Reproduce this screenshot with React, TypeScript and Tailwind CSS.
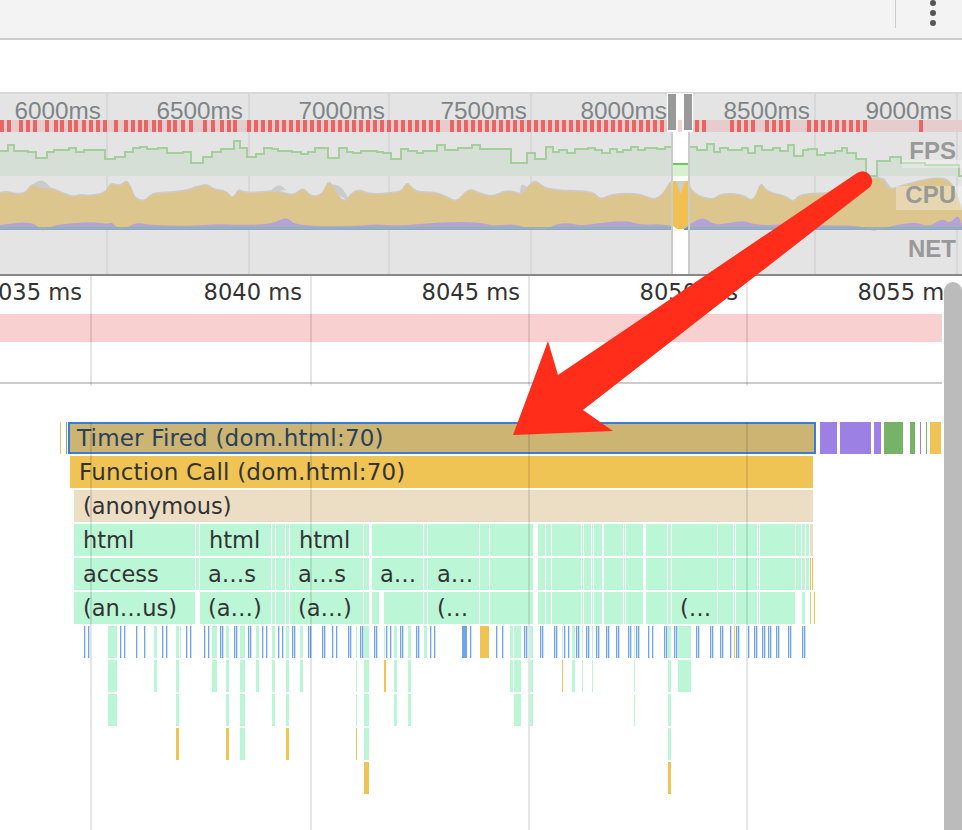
const MINT = 'bg-[#bbf7d6]'
const TAN = 'bg-[#ecdec5]'
const GOLD = 'bg-[#f0c355]'
const PURPLE = 'bg-[#9d80e4]'
const GREEN = 'bg-[#76b366]'
const BLUE = 'bg-[#6ea6e8] border-r border-[#cfe0f7]'

type Seg = [number, number, string]
type Label = [number, string]
type Row = { segs: Seg[]; labels?: Label[] }

const mint = (pairs: number[][]): Seg[] => pairs.map(([a, b]) => [a, b, MINT])
const gold = (pairs: number[][]): Seg[] => pairs.map(([a, b]) => [a, b, GOLD])
const ticks = (xs: number[]): Seg[] => xs.map((x) => [x, x + 2, BLUE])

// shared slices of the html / access / (anonymous) rows
const leftCols = [[74, 195], [200, 271], [272, 275], [276, 285], [286, 289], [290, 363], [364, 369]]
const midCols = [[424, 427], [428, 479], [480, 489], [490, 533], [538, 545], [546, 551], [552, 581], [582, 583], [584, 591], [592, 593], [594, 602], [604, 623], [624, 625], [626, 643], [646, 667], [668, 671], [672, 717], [718, 733], [734, 735], [736, 757], [758, 759], [760, 795]]
const tailCols = [[796, 801], [802, 805], [806, 809]]

const rows: Row[] = [
  {
    segs: [
      [60, 61, GOLD], [66, 67, GREEN],
      [820, 837, PURPLE], [840, 871, PURPLE], [874, 881, PURPLE], [884, 903, GREEN], [910, 915, GREEN],
      [920, 921, PURPLE], [926, 927, GREEN], [930, 941, GOLD],
    ],
  },
  { segs: [[70, 813, GOLD]], labels: [[79, 'Function Call (dom.html:70)']] },
  { segs: [[74, 813, TAN]], labels: [[83, '(anonymous)']] },
  {
    segs: [...mint(leftCols), ...mint([[196, 199], [372, 423]]), ...mint(midCols), ...mint(tailCols), [810, 813, TAN]],
    labels: [[83, 'html'], [209, 'html'], [299, 'html']],
  },
  {
    segs: [...mint(leftCols), ...mint([[196, 199], [372, 423]]), ...mint(midCols), ...mint(tailCols), [810, 811, GOLD], [812, 813, GOLD]],
    labels: [[83, 'access'], [208, 'a…s'], [298, 'a…s'], [380, 'a…'], [437, 'a…']],
  },
  {
    segs: [...mint(leftCols), ...mint([[372, 379], [384, 423]]), ...mint(midCols), ...mint([[802, 805]]), [810, 811, GOLD], [814, 815, GOLD]],
    labels: [[83, '(an…us)'], [208, '(a…)'], [298, '(a…)'], [437, '(…'], [680, '(…']],
  },
  {
    segs: [
      ...mint([[108, 117], [154, 157], [176, 179], [180, 181], [212, 217], [226, 229], [240, 245], [256, 259], [272, 275], [286, 289], [300, 303], [356, 357], [364, 369], [384, 385], [394, 397], [408, 411], [424, 427], [510, 513], [514, 521], [530, 533], [562, 563], [572, 575], [582, 583], [592, 593], [634, 635], [668, 671], [678, 691]]),
      ...ticks([84, 88, 120, 124, 136, 144, 162, 166, 186, 190, 204, 208, 220, 222, 234, 236, 248, 250, 262, 266, 278, 282, 292, 294, 308, 310, 322, 324, 332, 336, 348, 350, 360, 362, 374, 376, 386, 390, 400, 402, 416, 418, 430, 434, 470, 496, 502, 524, 526, 540, 542, 554, 556, 564, 568, 576, 578, 586, 588, 596, 598, 606, 608, 616, 618, 628, 630, 636, 638, 648, 652, 664, 666, 674, 676, 696, 698, 710, 712, 720, 722, 730, 736, 738, 748, 754, 756, 762, 764, 768, 770, 776, 778, 788, 790, 802, 804]),
      [462, 467, 'bg-[#6ea6e8]'], [480, 489, GOLD], [734, 735, GOLD],
    ],
  },
  {
    segs: [
      ...mint([[108, 117], [154, 157], [176, 179], [212, 217], [226, 229], [240, 245], [256, 259], [272, 275], [286, 289], [300, 303], [356, 357], [364, 369], [394, 397], [408, 411], [510, 513], [514, 521], [530, 533], [572, 575], [582, 583], [592, 593], [634, 635], [668, 671], [678, 691]]),
      ...gold([[384, 385.5], [562, 563]]),
    ],
  },
  { segs: mint([[108, 117], [176, 179], [226, 229], [240, 245], [272, 275], [286, 289], [356, 357], [364, 369], [394, 397], [408, 411], [514, 521], [530, 533], [634, 635], [668, 671]]) },
  { segs: [...gold([[176, 179], [226, 229], [286, 289], [356, 357]]), ...mint([[240, 245], [364, 369], [668, 671]])] },
  { segs: gold([[364, 369], [668, 671]]) },
]

const fpsSteps = [
  [0, 151], [8, 145], [14, 151], [28, 152], [36, 158], [47, 152], [54, 150], [69, 148], [76, 152], [84, 150], [105, 159], [115, 157], [125, 152], [133, 148], [140, 147], [147, 149], [158, 148], [167, 153], [183, 152], [191, 163], [203, 157], [212, 152], [221, 149], [227, 149], [234, 141], [240, 148], [247, 157], [256, 154], [264, 148], [272, 149], [278, 151], [292, 152], [301, 154], [308, 152], [315, 148], [328, 158], [339, 148], [347, 152], [353, 153], [361, 151], [377, 152], [383, 153], [391, 159], [401, 149], [408, 151], [417, 153], [423, 151], [437, 145], [445, 150], [458, 148], [472, 145], [480, 149], [511, 163], [527, 153], [535, 159], [546, 147], [553, 152], [559, 150], [567, 153], [575, 149], [588, 148], [595, 150], [602, 153], [610, 149], [617, 152], [623, 150], [631, 147], [638, 150], [645, 148], [657, 149], [665, 147], [672, 164], [688, 147], [697, 150], [707, 144], [714, 152], [720, 148], [728, 150], [742, 148], [748, 153], [755, 146], [762, 150], [773, 148], [780, 151], [788, 145], [794, 156], [803, 150], [808, 149], [817, 155], [825, 153], [835, 151], [842, 148], [847, 153], [856, 159], [866, 176], [877, 161], [890, 157], [901, 163], [912, 163], [925, 165], [945, 165], [959, 176],
]
const fpsLine = fpsSteps.map(([x, y], i) => (i === 0 ? `M${x} ${y}` : `H${x}V${y}`)).join('') + 'H962'
const fpsArea = `${fpsLine}V176H0Z`

const cpuLeft = [[0, 580], [20, 575], [40, 583], [75, 583], [95, 552], [120, 565], [150, 565], [200, 585], [220, 592], [240, 585], [265, 590], [315, 582], [330, 550], [360, 560], [380, 542], [395, 565], [405, 597], [435, 606], [455, 580], [530, 578], [570, 570], [620, 552], [640, 570], [680, 575], [698, 600], [715, 568], [730, 580], [790, 578], [830, 573], [880, 590], [910, 563], [930, 590], [965, 590], [985, 540], [1005, 570], [1032, 612], [1055, 580], [1080, 571], [1110, 585], [1180, 580], [1205, 575], [1222, 545], [1245, 578], [1305, 578], [1340, 592], [1370, 608], [1395, 578], [1415, 570]]
const cpuRight = [[0, 582], [40, 592], [70, 575], [100, 575], [120, 585], [140, 565], [165, 540], [200, 573], [340, 575], [360, 603], [395, 583], [480, 582], [520, 603], [550, 585], [572, 540], [598, 560], [622, 540], [640, 585], [700, 603], [720, 582], [790, 585], [820, 610], [842, 545], [860, 578], [920, 590], [940, 610], [960, 582], [1100, 580], [1170, 535], [1210, 535], [1230, 572], [1255, 560], [1320, 545], [1360, 535], [1415, 540], [1446, 630]]
const cpuTop = [...cpuLeft.map(([x, y]) => [x / 3, y / 3]), ...cpuRight.map(([x, y]) => [480 + x / 3, y / 3])]

const purpleTop = [[0, 225], [8, 224], [24, 222], [36, 224], [42, 232], [50, 226], [72, 223], [95, 222], [108, 224], [112, 222], [121, 232], [135, 222], [150, 225], [190, 226], [217, 224], [240, 225], [273, 224], [287, 216], [295, 226], [360, 226], [375, 224], [400, 226], [440, 222], [480, 222], [492, 226], [512, 224], [520, 226], [543, 231], [560, 222], [580, 225], [585, 225], [625, 220], [640, 225], [660, 224], [671, 226], [688, 226], [703, 216], [715, 226], [743, 220], [755, 225], [783, 225], [803, 219], [815, 226], [860, 225], [873, 232], [890, 226], [915, 222], [930, 227], [942, 218], [950, 224], [958, 214], [962, 225]]

const smooth = (pts: number[][]) => {
  let d = `M${pts[0][0]} ${pts[0][1]}`
  for (let i = 1; i < pts.length - 1; i++) {
    const mx = (pts[i][0] + pts[i + 1][0]) / 2
    const my = (pts[i][1] + pts[i + 1][1]) / 2
    d += `Q${pts[i][0]} ${pts[i][1]} ${mx} ${my}`
  }
  const last = pts[pts.length - 1]
  return `${d}L${last[0]} ${last[1]}`
}
const area = (pts: number[][]) => `${smooth(pts)}L962 230L0 230Z`

const overviewLines = [107, 249, 389, 531, 815, 957]
const paleRanges = [[440, 448], [710, 723], [757, 762], [790, 800], [868, 888], [893, 898], [903, 913], [928, 937], [943, 962]]
const firstStripes = [0, 7, 19, 26, 33, 45, 54, 60, 68, 74, 82, 89, 96, 103, 114, 124, 131, 138, 144, 152, 158, 167, 173, 181, 189, 203, 211, 220, 227, 233]
const stripes = [
  ...firstStripes,
  ...Array.from({ length: 103 }, (_, i) => 247 + i * 7).filter((x) => !paleRanges.some(([a, b]) => x + 3 >= a && x <= b)),
]

function OverviewChart() {
  return (
    <svg className="absolute inset-0" width="962" height="182" viewBox="0 92 962 182">
      {overviewLines.map((x) => (
        <rect key={x} x={x - 1} y="94" width="2" height="180" fill="#d8d8d8" />
      ))}
      <rect x="0" y="120" width="962" height="12" fill="#e6cccc" />
      {stripes.map((x) => (
        <rect key={x} x={x} y="120" width="4" height="12" fill="#eb6464" />
      ))}
      <path d={fpsArea} fill="#d5dfd5" />
      <path d={fpsLine} fill="none" stroke="#a4cf9c" strokeWidth="2" />
      <path d="M28 192Q40 170 52 190ZM183 196L195 186L207 186L212 192ZM270 192Q278 180 286 190ZM326 187Q340 178 350 202ZM520 194Q520 176 530 192ZM870 180L884 178L893 190L880 190Z" fill="#cbcbcb" />
      <path d={area(cpuTop)} fill="#cbcbcb" transform="translate(0 -1.5)" />
      <path d={area(cpuTop)} fill="#dcc68e" />
      <path d={area(purpleTop)} fill="#b3a3d9" />
      <rect x="0" y="227" width="962" height="1.5" fill="#94b596" />
      <rect x="0" y="228.5" width="962" height="1.5" fill="#8ca9d0" />

      <rect x="673" y="132" width="15" height="142" fill="#ffffff" />
      <rect x="671" y="132" width="2" height="142" fill="#cccccc" />
      <rect x="688" y="132" width="2" height="142" fill="#cccccc" />
      <rect x="673" y="165" width="15" height="11" fill="#d6f0d0" />
      <rect x="673" y="163" width="15" height="2" fill="#6cc75c" />
      <rect x="673" y="181" width="15" height="15" fill="#cccccc" />
      <path d="M673 181Q677 180 679 190Q680.500 197 682 190Q684 180 688 181V226L684 229H677L673 226Z" fill="#f0c050" />
      <path d="M684 229L688 226V230H684Z" fill="#6b8fd0" />
      <rect x="667" y="93" width="26" height="39" fill="#ffffff" />
      <rect x="678" y="120" width="4" height="12" fill="#fbd0d0" />
      <rect x="668" y="94" width="8" height="36" fill="#999999" />
      <rect x="684" y="94" width="8" height="36" fill="#999999" />
    </svg>
  )
}

function Overview() {
  const labelClass = "text-right font-['Liberation_Sans',sans-serif] text-[24.3px] leading-[26px] text-[#7f8487]"
  const stripClass = "absolute right-0 text-right font-['Liberation_Sans',sans-serif] text-[24px] leading-[26px] font-bold text-[#999999] pr-[6px]"
  return (
    <div className="relative h-[184px] border-b-2 border-[#888888] bg-[#e4e4e4] shadow-[inset_0_2px_0_#d8d8d8]">
      <OverviewChart />
      <div className="relative flex pt-[6px]">
        <div className={`w-[101px] shrink-0 ${labelClass}`}>6000ms</div>
        <div className={`w-[142px] shrink-0 ${labelClass}`}>6500ms</div>
        <div className={`w-[142px] shrink-0 ${labelClass}`}>7000ms</div>
        <div className={`w-[142px] shrink-0 ${labelClass}`}>7500ms</div>
        <div className={`w-[140px] shrink-0 ${labelClass}`}>8000ms</div>
        <div className={`w-[143px] shrink-0 ${labelClass}`}>8500ms</div>
        <div className={`w-[142px] shrink-0 ${labelClass}`}>9000ms</div>
      </div>
      <div className="absolute right-0 top-[68px] h-[8px] w-[60px] bg-white/30" />
      <div className="absolute right-0 top-[94px] h-[24px] w-[66px] bg-white/30" />
      <div className={`${stripClass} top-[46px]`}>FPS</div>
      <div className={`${stripClass} top-[90px]`}>CPU</div>
      <div className={`${stripClass} top-[144px]`}>NET</div>
    </div>
  )
}

function GridLines({ className }: { className: string }) {
  return (
    <>
      {[90, 310, 528, 746].map((x) => (
        <div key={x} className={`absolute w-[2px] bg-black/10 ${className}`} style={{ left: x }} />
      ))}
    </>
  )
}

function TimeHeader() {
  const cell = 'flex shrink-0 justify-end overflow-hidden whitespace-nowrap'
  return (
    <div className="relative h-[108px] font-['DejaVu_Sans',sans-serif] text-[22.6px] text-[#333333]">
      <div className="flex h-[38px] items-center pb-[5px]">
        <div className={`${cell} w-[82px]`}>8035 ms</div>
        <div className={`${cell} w-[220px]`}>8040 ms</div>
        <div className={`${cell} w-[218px]`}>8045 ms</div>
        <div className={`${cell} w-[218px]`}>8050 ms</div>
        <div className={`${cell} w-[218px]`}>8055 ms</div>
      </div>
      <div className="h-[28px] w-[942px] bg-[#f9d0d0]" />
      <div className="mt-[40px] h-[2px] w-[942px] bg-[#cccccc]" />
      <GridLines className="top-0 h-[110px]" />
    </div>
  )
}

function FlameRow({ row, wide }: { row: Row; wide: boolean }) {
  return (
    <div className={`relative mb-[2px] h-[32px] ${wide ? 'text-[23px] tracking-[0.2px]' : 'text-[22.5px]'}`}>
      {row.segs.map(([a, b, color], i) => (
        <div key={i} className={`absolute inset-y-0 ${color}`} style={{ left: a, width: b - a }} />
      ))}
      {row.labels?.map(([x, text]) => (
        <span key={x} className="absolute top-0 whitespace-nowrap leading-[32px] text-[#333333]" style={{ left: x }}>
          {text}
        </span>
      ))}
    </div>
  )
}

function FlameChart() {
  return (
    <div className="relative pt-[38px] font-['DejaVu_Sans',sans-serif]">
      <div className="relative">
        <div className="absolute left-[68px] top-0 h-[32px] w-[748px] border-2 border-[#3b7bd9] bg-[#ccb472] pl-[7px] text-[23px] leading-[28px] tracking-[0.2px] whitespace-nowrap text-[#2b3f5c]">
          Timer Fired (dom.html:70)
        </div>
        {rows.map((row, i) => (
          <FlameRow key={i} row={row} wide={i < 2} />
        ))}
      </div>
      <GridLines className="top-[38px] h-[410px]" />
    </div>
  )
}

function Arrow() {
  return (
    <svg className="absolute inset-0" width="962" height="830" viewBox="0 0 962 830">
      <path
        d="M857 173Q864 169 869 174Q875 181 870 187L583 410L613 431L513 435L548 341L558 375Z"
        fill="#ff2d1a"
      />
    </svg>
  )
}

export default function App() {
  return (
    <div className="relative h-[830px] w-[962px] overflow-hidden bg-white">
      <div className="flex h-[40px] justify-end border-b-2 border-[#cccccc] bg-[#f3f3f3]">
        <div className="h-[28px] w-px bg-[#cccccc]" />
        <div className="ml-[34px] mr-[26px] flex flex-col gap-[4px]">
          <span className="size-[6px] rounded-full bg-[#555555]" />
          <span className="size-[6px] rounded-full bg-[#555555]" />
          <span className="size-[6px] rounded-full bg-[#555555]" />
        </div>
      </div>
      <div className="h-[52px]" />
      <Overview />
      <TimeHeader />
      <FlameChart />
      <div className="absolute bottom-0 right-0 top-[282px] w-[18px] rounded-t-full bg-[#bbbbbb]" />
      <Arrow />
    </div>
  )
}
